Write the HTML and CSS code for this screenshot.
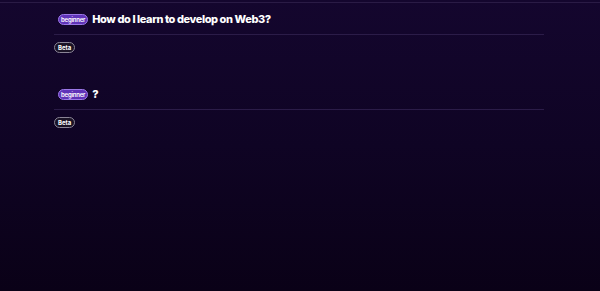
FILE: index.html
```html
<!DOCTYPE html>
<html>
<head>
<meta charset="utf-8">
<link rel="stylesheet" href="styles.css">
</head>
<body>
<div class="page">
  <div class="topline"></div>
  <div class="list">
    <div class="item">
      <div class="head">
        <span class="badge-level">beginner</span>
        <span class="title">How do I learn to develop on Web3?</span>
      </div>
      <div class="tags"><span class="badge-beta">Beta</span></div>
    </div>
    <div class="item">
      <div class="head">
        <span class="badge-level">beginner</span>
        <span class="title">?</span>
      </div>
      <div class="tags"><span class="badge-beta">Beta</span></div>
    </div>
  </div>
</div>
</body>
</html>
```
FILE: styles.css
```css
html, body {
  margin: 0;
  padding: 0;
  height: 100%;
}
body {
  background: linear-gradient(180deg, #14062e 0%, #0f0424 50%, #0a0117 100%);
  font-family: Inter, "Liberation Sans", sans-serif;
  color: #fff;
}
.page {
  height: 291px;
  padding-top: 2px;
  box-sizing: border-box;
}
.topline {
  height: 1px;
  background: #2a1b45;
}
.list {
  width: 490px;
  margin-left: 54px;
  padding-top: 9px;
}
.item {
  margin-bottom: 34px;
}
.head {
  display: flex;
  align-items: center;
  gap: 4px;
  padding-left: 4px;
  height: 14px;
  padding-bottom: 8px;
  border-bottom: 1px solid #2b1c48;
}
.badge-level {
  display: inline-flex;
  align-items: center;
  justify-content: center;
  height: 9px;
  padding: 0 2px;
  border: 1px solid #9b78e6;
  border-radius: 6px;
  background: #5f33b8;
  font-size: 6px;
  font-weight: 600;
  letter-spacing: -0.2px;
  line-height: 9px;
}
.title {
  font-size: 11px;
  font-weight: 800;
  letter-spacing: -0.42px;
}
.tags {
  padding-top: 7px;
  display: flex;
}
.badge-beta {
  display: inline-flex;
  align-items: center;
  justify-content: center;
  height: 9px;
  padding: 0 3px;
  border: 1px solid #8a8496;
  border-radius: 6px;
  background: #1a1326;
  font-size: 6px;
  font-weight: 700;
  line-height: 9px;
}
```
